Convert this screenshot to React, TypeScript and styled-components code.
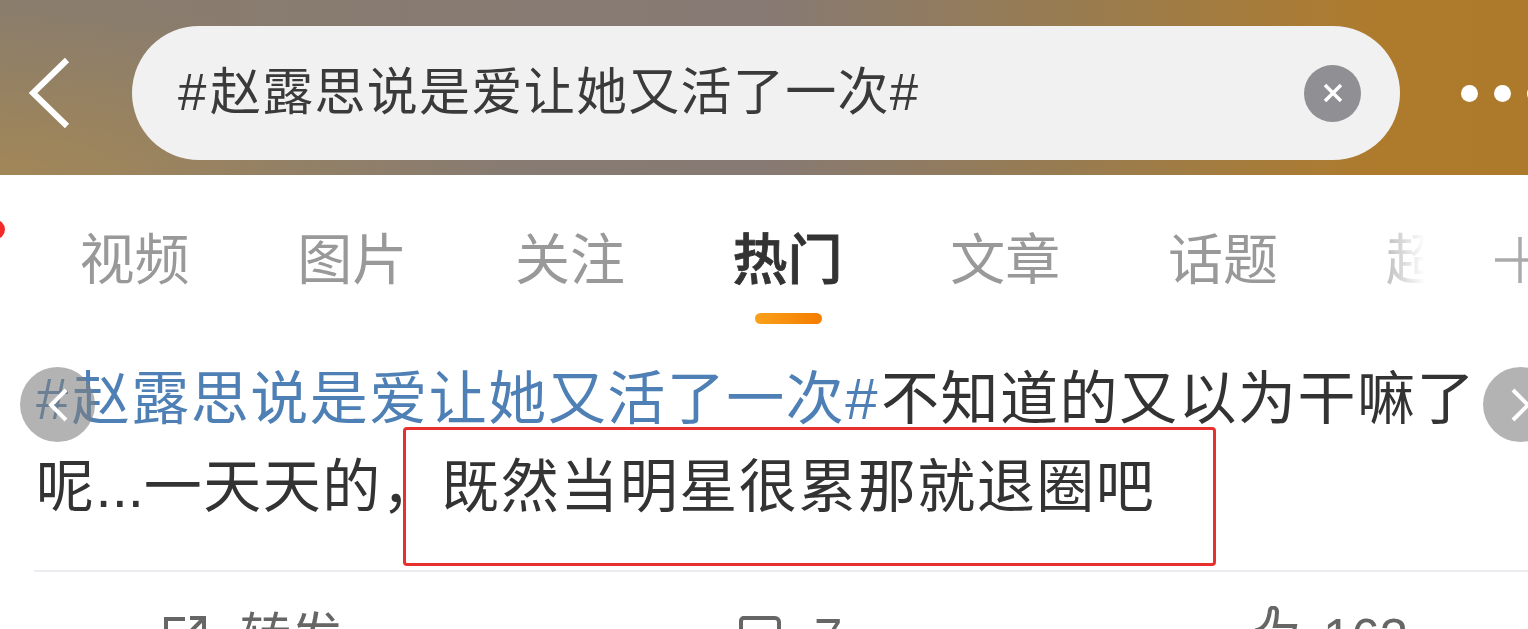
import styled, { createGlobalStyle } from "styled-components";

const GlobalStyle = createGlobalStyle`
  html, body {
    margin: 0;
    padding: 0;
    background: #fff;
    overflow: hidden;
  }
  * { box-sizing: border-box; }
`;

const Page = styled.div`
  position: relative;
  width: 1528px;
  height: 629px;
  overflow: hidden;
  background: #fff;
  font-family: "Liberation Sans", "Noto Sans CJK SC", sans-serif;
`;

const Header = styled.header`
  height: 175px;
  padding: 26px 0 15px 26px;
  display: flex;
  align-items: center;
  background:
    radial-gradient(ellipse 520px 170px at 0% 100%, rgba(170, 138, 80, 0.75), rgba(170, 138, 80, 0)),
    linear-gradient(90deg, #8a7d6c 0%, #877b72 30%, #877a74 50%, #987c50 70%, #ae7b2d 90%, #ad7a2c 100%);
`;

const BackIcon = styled.svg`
  width: 46px;
  height: 76px;
  flex: none;
  margin-right: 60px;
`;

const SearchPill = styled.div`
  width: 1268px;
  height: 134px;
  flex: none;
  padding: 0 39px 0 46px;
  display: flex;
  align-items: center;
  justify-content: space-between;
  background: #f1f1f1;
  border-radius: 67px;
`;

const SearchText = styled.span`
  font-size: 51px;
  letter-spacing: 1.3px;
  line-height: 136px;
  color: #3a3a3a;
  white-space: nowrap;
`;

const ClearButton = styled.span`
  width: 57px;
  height: 57px;
  flex: none;
  border-radius: 50%;
  background: #8f8f94;
  display: flex;
  align-items: center;
  justify-content: center;
`;

const Dots = styled.div`
  margin-left: 61px;
  display: flex;
  gap: 16px;
  flex: none;
`;

const Dot = styled.span`
  width: 17px;
  height: 17px;
  border-radius: 50%;
  background: #fff;
`;

const Tabs = styled.nav`
  position: relative;
  height: 149px;
  padding-left: 79.5px;
  display: flex;
  gap: 107.7px;
  overflow: hidden;
`;

const Tab = styled.div<{ $active?: boolean }>`
  position: relative;
  width: 110px;
  flex: none;
  padding-top: 47px;
  font-size: 55px;
  line-height: 76px;
  white-space: nowrap;
  font-weight: ${(p) => (p.$active ? 500 : 400)};
  color: ${(p) => (p.$active ? "#333" : "#999")};
  -webkit-text-stroke: ${(p) => (p.$active ? "0.8px #333" : "0")};
`;

const Indicator = styled.span`
  position: absolute;
  left: 22px;
  top: 138px;
  width: 67px;
  height: 11px;
  border-radius: 6px;
  background: linear-gradient(90deg, #f9a11b, #f57c00);
`;

const RedDot = styled.span`
  position: absolute;
  left: -14px;
  top: 45px;
  width: 19px;
  height: 19px;
  border-radius: 50%;
  background: #f22a2a;
`;

const TabFade = styled.div`
  position: absolute;
  left: 1385px;
  top: 0;
  width: 143px;
  height: 100%;
  background: linear-gradient(90deg, rgba(255, 255, 255, 0.35) 0%, #fff 28%, #fff 100%);
`;

const AddTab = styled.svg`
  position: absolute;
  left: 1495px;
  top: 60px;
  width: 50px;
  height: 50px;
`;

const Post = styled.section`
  padding: 31px 0 0 36px;
`;

const PostText = styled.p`
  position: relative;
  margin: 0;
  width: 1460px;
  height: 215px;
  font-size: 58px;
  letter-spacing: 1.5px;
  line-height: 88px;
  color: #333;
`;

const TopicLink = styled.span`
  color: #4f80b5;
`;

const Hash = styled.span`
  letter-spacing: 3.5px;
`;

const Ellipsis = styled.span`
  letter-spacing: 0;
`;

const Highlight = styled.span`
  position: absolute;
  left: 367px;
  top: 72px;
  width: 813px;
  height: 139px;
  border: 3px solid #e8302f;
  border-radius: 4px;
`;

const Actions = styled.div`
  margin-left: -2px;
  border-top: 2px solid #ecebef;
  height: 60px;
  position: relative;
  display: grid;
  grid-template-columns: 574px 518px 1fr;
  padding-left: 129px;
  padding-top: 31px;
`;

const Action = styled.div<{ $gap?: number }>`
  display: flex;
  align-items: flex-start;
  gap: ${(p) => p.$gap ?? 33}px;
  font-size: 51px;
  line-height: 70px;
  color: #666;
  white-space: nowrap;
`;

const ActionIcon = styled.svg<{ $top?: number }>`
  width: 44px;
  height: 44px;
  flex: none;
  margin-top: ${(p) => p.$top ?? 12}px;
`;

const RoundNav = styled.span<{ $side: "left" | "right" }>`
  position: absolute;
  top: 367px;
  left: ${(p) => (p.$side === "left" ? "20px" : "1483px")};
  width: 75px;
  height: 75px;
  border-radius: 50%;
  background: rgba(128, 128, 128, 0.6);
  display: flex;
  align-items: center;
  justify-content: center;
`;

function Chevron({ dir }: { dir: "left" | "right" }) {
  return (
    <svg width="20" height="34" viewBox="0 0 20 34" fill="none">
      <path
        d={dir === "left" ? "M18 2 3 17l15 15" : "M2 2l15 15L2 32"}
        stroke="#fff"
        strokeWidth="4"
      />
    </svg>
  );
}

const tabs = ["视频", "图片", "关注", "热门", "文章", "话题", "超话"];

export default function App() {
  return (
    <Page>
      <GlobalStyle />
      <Header>
        <BackIcon viewBox="0 0 46 76" fill="none">
          <path d="M41 5 7 38l34 33" stroke="#fff" strokeWidth="6" />
        </BackIcon>
        <SearchPill>
          <SearchText>
            <Hash>#</Hash>赵露思说是爱让她又活了一次#
          </SearchText>
          <ClearButton>
            <svg width="22" height="22" viewBox="0 0 22 22" fill="none">
              <path d="M3 3l16 16M19 3 3 19" stroke="#fff" strokeWidth="3.5" />
            </svg>
          </ClearButton>
        </SearchPill>
        <Dots>
          <Dot />
          <Dot />
          <Dot />
        </Dots>
      </Header>

      <Tabs>
        <RedDot />
        {tabs.map((t) => (
          <Tab key={t} $active={t === "热门"}>
            {t}
            {t === "热门" && <Indicator />}
          </Tab>
        ))}
        <TabFade />
        <AddTab viewBox="0 0 50 50" fill="none">
          <path d="M0 25h50M25 2v46" stroke="#aaa" strokeWidth="3.5" />
        </AddTab>
      </Tabs>

      <Post>
        <PostText>
          <TopicLink>
            <Hash>#</Hash>赵露思说是爱让她又活了一次<Hash>#</Hash>
          </TopicLink>
          不知道的又以为干嘛了呢<Ellipsis>...</Ellipsis>一天天的，既然当明星很累那就退圈吧
          <Highlight />
        </PostText>
        <Actions>
          <Action>
            <ActionIcon viewBox="0 0 44 44" fill="none" stroke="#666" strokeWidth="4">
              <path d="M22 4H3v37h37V24M18 26 40 4M27 3h14v14" />
            </ActionIcon>
            转发
          </Action>
          <Action>
            <ActionIcon viewBox="0 0 44 44" fill="none" stroke="#666" strokeWidth="4">
              <path d="M6 3h32a4 4 0 0 1 4 4v28H14l-10 8V7a4 4 0 0 1 2-4Z" />
            </ActionIcon>
            7
          </Action>
          <Action $gap={24}>
            <ActionIcon $top={3} viewBox="0 0 44 44" fill="none" stroke="#666" strokeWidth="4">
              <path d="M2 42V24c8-2 12-10 13-20 1-4 7-3 7 2 0 5-1 10-2 14h20l-4 22Z" />
            </ActionIcon>
            163
          </Action>
        </Actions>
      </Post>

      <RoundNav $side="left">
        <Chevron dir="left" />
      </RoundNav>
      <RoundNav $side="right">
        <Chevron dir="right" />
      </RoundNav>
    </Page>
  );
}
